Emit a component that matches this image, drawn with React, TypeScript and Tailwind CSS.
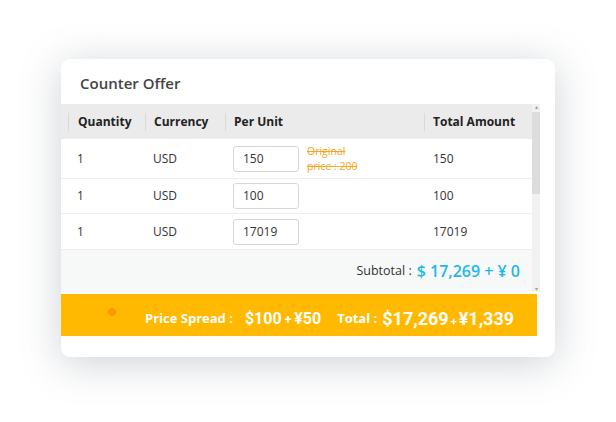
const rows = [
  { qty: "1", cur: "USD", unit: "150", original: "200", total: "150", tall: true },
  { qty: "1", cur: "USD", unit: "100", total: "100" },
  { qty: "1", cur: "USD", unit: "17019", total: "17019" },
]

const font = { fontFamily: "'Open Sans', 'Noto Sans', sans-serif" }
const num = { fontFamily: "Roboto, 'Open Sans', sans-serif" }

export default function App() {
  return (
    <div className="h-[422px] w-[616px] bg-white pl-[61px] pt-[59px]" style={font}>
      <div className="flex h-[298px] w-[494px] flex-col overflow-hidden rounded-[9px] bg-white shadow-[0_6px_42px_rgba(100,112,124,0.32)]">
        {/* title */}
        <div className="flex h-[45px] shrink-0 items-center pl-[19px] pt-[3px] text-[15px] font-semibold text-[#444]">
          Counter Offer
        </div>

        {/* table + scrollbar */}
        <div className="flex h-[188px] w-[479px] shrink-0">
          <div className="flex w-[471px] flex-col">
            <div className="flex h-[35px] shrink-0 items-center bg-[#ebebeb] pl-[7px] text-[12px] font-bold text-[#222]">
              <div className="w-[77px] border-l border-[#d9d9d9] pl-[9px] leading-[18px]">Quantity</div>
              <div className="w-[80px] border-l border-[#d9d9d9] pl-[8px] leading-[18px]">Currency</div>
              <div className="w-[199px] border-l border-[#d9d9d9] pl-[8px] leading-[18px]">Per Unit</div>
              <div className="flex-1 border-l border-[#d9d9d9] pl-[8px] leading-[18px]">Total Amount</div>
            </div>
            {rows.map((r, i) => (
              <div
                key={i}
                className={`flex shrink-0 items-center border-b border-[#eeeeee] bg-white pl-[7px] text-[12px] text-[#333] ${r.tall ? "h-[40px]" : i === 1 ? "h-[35px]" : "h-[36px]"}`}
              >
                <div className="w-[77px] pl-[9px]">{r.qty}</div>
                <div className="w-[80px] pl-[8px]">{r.cur}</div>
                <div className="flex w-[199px] items-center pl-[8px]">
                  <div className="flex h-[26px] w-[66px] items-center rounded-[3px] border border-[#d6d6d6] pl-[9px]">{r.unit}</div>
                  {r.original && (
                    <div className="ml-[8px] text-[10.5px] leading-[15px] text-[#f6a623] line-through">
                      Original
                      <br />
                      price : {r.original}
                    </div>
                  )}
                </div>
                <div className="flex-1 pl-[9px]">{r.total}</div>
              </div>
            ))}
            <div className="flex flex-1 items-center justify-end bg-[#f7f9f9] pr-[12px]">
              <span className="text-[12.5px] text-[#333]">Subtotal :</span>
              <span className="ml-[5px] text-[16px] font-semibold text-[#1fb6ea]">$ 17,269 + ¥ 0</span>
            </div>
          </div>
          {/* scrollbar */}
          <div className="flex w-[8px] flex-col items-center bg-[#f1f1f1]">
            <div className="flex h-[6px] items-center text-[6px] leading-none text-[#a0a0a0]">▴</div>
            <div className="mt-[2px] h-[82px] w-[8px] bg-[#dcdcdc]" />
            <div className="flex-1" />
            <div className="flex h-[6px] items-center text-[6px] leading-none text-[#a0a0a0]">▾</div>
          </div>
        </div>

        {/* price spread bar */}
        <div className="mt-[2px] flex h-[42px] w-[476px] shrink-0 items-center bg-[#ffb900] pt-[7px] text-white">
          <div className="ml-[47px] mb-[14px] h-[8px] w-[8px] rounded-full bg-[#ff9400]" />
          <span className="ml-[29px] text-[13px] font-bold">Price Spread :</span>
          <span className="ml-[12px] flex items-baseline font-bold" style={num}>
            <span className="text-[16px]">$100</span>
            <span className="mx-[3px] text-[12px]">+</span>
            <span className="text-[16px]">¥50</span>
          </span>
          <span className="ml-[16px] text-[13px] font-bold">Total :</span>
          <span className="ml-[5px] flex items-baseline font-bold" style={num}>
            <span className="text-[18px]">$17,269</span>
            <span className="mx-[2px] text-[11px]">+</span>
            <span className="text-[18px]">¥1,339</span>
          </span>
        </div>
      </div>
    </div>
  )
}
